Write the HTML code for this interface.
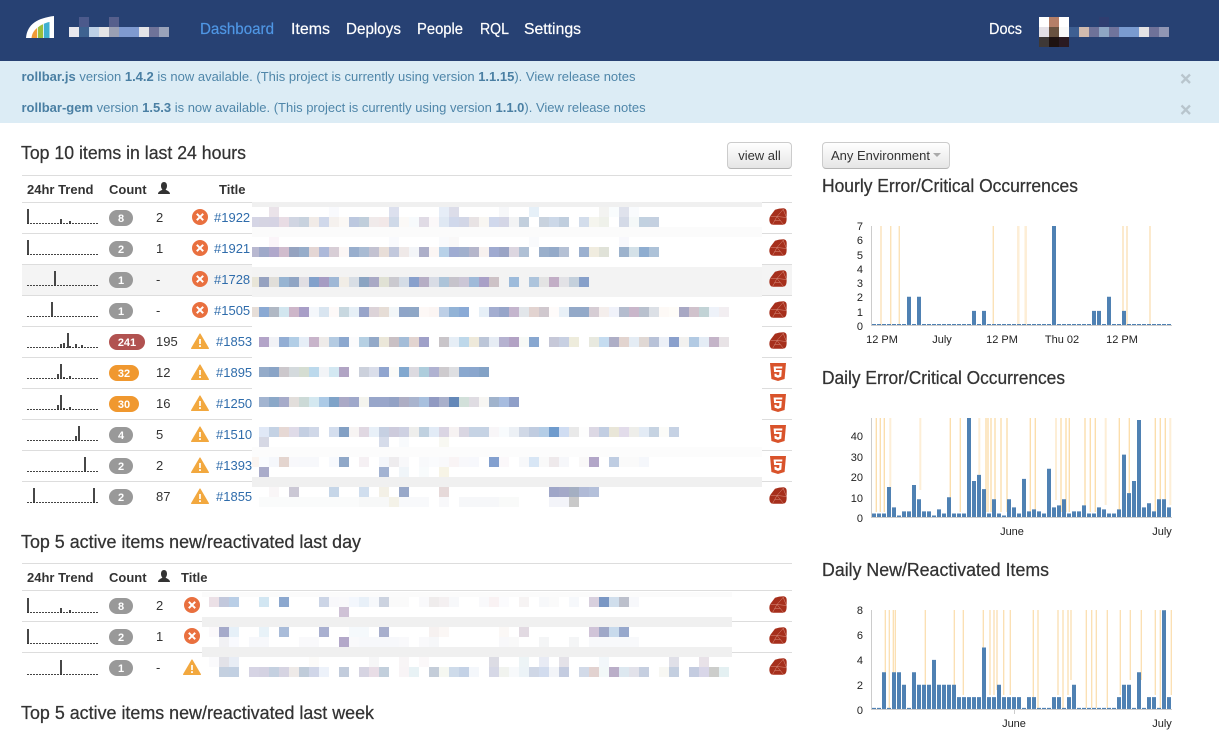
<!DOCTYPE html>
<html><head><meta charset="utf-8"><title>Dashboard</title>
<style>
html,body{margin:0;padding:0;background:#fff;width:1219px;height:734px;overflow:hidden}
body{position:relative;font-family:"Liberation Sans",Arial,sans-serif}
.a{position:absolute}
.l{position:absolute;left:22px;width:770px;height:1px;background:#ddd}
.m{position:absolute;left:259px;width:510px;height:10px}
.n{position:absolute;left:209px;width:530px;height:10px}
.t{position:absolute;left:21.500px;font-size:13px;line-height:16px;color:#4f86a9;white-space:nowrap}
.t b{color:#4a7fa3}
svg{position:absolute;left:0;top:0}
svg text{font-family:"Liberation Sans",Arial,sans-serif}
.h{font-size:18px;fill:#333;stroke:#333;stroke-width:.25}
.v{font-size:16px;fill:#fff;stroke:#fff;stroke-width:.2}
.th{font-size:13px;font-weight:bold;fill:#333}
.c{font-size:13px;fill:#333}
.k{font-size:13px;fill:#2f6cab}
.b{font-size:11px;font-weight:bold;fill:#fff;text-anchor:middle}
.x{font-size:11px;fill:#222;text-anchor:middle}
.y{font-size:11px;fill:#222;text-anchor:end}
</style></head><body>

<div class="a" style="left:0;top:0;width:1219px;height:61px;background:#274173"></div>
<div class="a" style="left:0;top:61px;width:1219px;height:62px;background:#dcecf5"></div>

<!-- header blurred blocks -->
<div class="a" style="left:69px;top:27px;width:100px;height:10px;background:linear-gradient(90deg,#e8e8ee 0 10px,#3e6290 0 20px,#bdd0e6 0 30px,#e4e4e6 0 40px,#9aa0b4 0 50px,#7f9ad0 0 70px,#e4e4e8 0 80px,#6f7399 0 90px,#9aa3ba 0 100px)"></div>
<div class="a" style="left:79px;top:17px;width:10px;height:10px;background:#4c5a8c"></div>
<div class="a" style="left:109px;top:17px;width:10px;height:10px;background:#565f8c"></div>
<div class="a" style="left:1039px;top:17px;width:30px;height:10px;background:linear-gradient(90deg,#fff 0 10px,#b57f68 0 20px,#fff 0 30px)"></div>
<div class="a" style="left:1039px;top:27px;width:30px;height:10px;background:linear-gradient(90deg,#e4e0e6 0 10px,#695240 0 20px,#f8f8f8 0 30px)"></div>
<div class="a" style="left:1039px;top:37px;width:30px;height:10px;background:linear-gradient(90deg,#3e3836 0 10px,#1e1210 0 20px,#2a1a22 0 30px)"></div>
<div class="a" style="left:1069px;top:27px;width:100px;height:10px;background:linear-gradient(90deg,#3e5f92 0 10px,#d0baae 0 20px,#6e7299 0 30px,#8ea6c4 0 40px,#70749c 0 50px,#7a9bd0 0 70px,#e4e2e4 0 80px,#6f7299 0 90px,#9096b4 0 100px)"></div>
<div class="a" style="left:1099px;top:17px;width:10px;height:10px;background:#2f3d70"></div>

<div class="t" style="top:69px"><b>rollbar.js</b> version <b>1.4.2</b> is now available. (This project is currently using version <b>1.1.15</b>). View release notes</div>
<div class="t" style="top:100px"><b>rollbar-gem</b> version <b>1.5.3</b> is now available. (This project is currently using version <b>1.1.0</b>). View release notes</div>

<!-- table rules -->
<div class="l" style="top:175px"></div><div class="l" style="top:202px"></div><div class="l" style="top:233px"></div><div class="l" style="top:264px"></div><div class="l" style="top:295px"></div><div class="l" style="top:326px"></div><div class="l" style="top:357px"></div><div class="l" style="top:388px"></div><div class="l" style="top:419px"></div><div class="l" style="top:450px"></div><div class="l" style="top:481px"></div>
<div class="l" style="top:563px"></div><div class="l" style="top:590px"></div><div class="l" style="top:621px"></div><div class="l" style="top:652px"></div>
<div class="a" style="left:22px;top:265px;width:770px;height:30px;background:#f4f4f4"></div>

<!-- table 1 blurred titles -->
<div class="a" style="left:252px;top:203px;width:510px;height:305px;background:#fff"></div>
<div class="a" style="left:252px;top:202px;width:510px;height:5px;background:#f0f0f0"></div>
<div class="a" style="left:252px;top:227px;width:510px;height:10px;background:#fbfbfb"></div>
<div class="a" style="left:252px;top:267px;width:510px;height:30px;background:#f3f3f3"></div>
<div class="a" style="left:252px;top:447px;width:510px;height:10px;background:#fcfcfc"></div>
<div class="a" style="left:252px;top:477px;width:510px;height:10px;background:#f0f0f0"></div>

<div class="a" style="left:252px;top:217px;width:7px;height:10px;background:#d5d5e5"></div>
<div class="a" style="left:252px;top:247px;width:7px;height:10px;background:#b8b8d0"></div>
<div class="a" style="left:252px;top:277px;width:7px;height:10px;background:#e8e5d8"></div>
<div class="a" style="left:252px;top:307px;width:7px;height:10px;background:#e6ded8"></div>
<div class="a" style="left:252px;top:457px;width:7px;height:10px;background:#fbf5f1"></div>

<div class="m" style="top:207px;background:linear-gradient(90deg,#0000 0 10px,#eae3e9 0 20px,#0000 0 70px,#f9fafd 0 80px,#0000 0 130px,#dce0ee 0 140px,#0000 0 180px,#e6edf7 0 190px,#dcdde9 0 200px,#0000 0 240px,#f6f7f9 0 250px,#0000 0 270px,#e6f0f8 0 280px,#0000 0 340px,#f3f3f1 0 350px,#f9fcfd 0 360px,#dfe2ec 0 370px,#f9fbfd 0 380px,#0000 0)"></div>
<div class="m" style="top:217px;background:linear-gradient(90deg,#d5d4e2 0 10px,#d5d3e3 0 20px,#e8dce4 0 30px,#d0d5e2 0 40px,#c8d2de 0 50px,#f1ebe7 0 60px,#d0d8ea 0 70px,#f5f1ee 0 80px,#fbf8f5 0 90px,#bcc8df 0 100px,#c0cedb 0 110px,#f0eaea 0 120px,#f2e8e8 0 130px,#cfd9e8 0 140px,#fbf9f7 0 150px,#f7fafc 0 160px,#e0dbe5 0 170px,#fbf8f9 0 180px,#dfe8f3 0 190px,#d0d8eb 0 200px,#d2d6e6 0 210px,#e8e3e4 0 220px,#f8f6f2 0 230px,#d0d8ec 0 240px,#d4d6e6 0 250px,#f2f3f4 0 260px,#c2cfdd 0 270px,#fff 0 280px,#c8d2de 0 290px,#ccd8e8 0 300px,#c0cede 0 310px,#fff 0 320px,#d3ddeb 0 330px,#f5f5ee 0 340px,#eff1ea 0 350px,#fff 0 360px,#d4dae7 0 370px,#f4f8f8 0 380px,#c2d1e0 0 390px,#c4d0e0 0 400px,#0000 0)"></div>
<div class="m" style="top:237px;background:linear-gradient(90deg,#0000 0 10px,#fbf5f9 0 20px,#0000 0 130px,#f9fafd 0 140px,#0000 0 180px,#f9fafc 0 190px,#f9f8f8 0 200px,#0000 0 270px,#f9fafc 0 280px,#0000 0 360px,#f8f8fc 0 370px,#0000 0)"></div>
<div class="m" style="top:247px;background:linear-gradient(90deg,#9fa9c9 0 10px,#b0a8cb 0 20px,#d0bccd 0 30px,#95a3c0 0 40px,#97adca 0 50px,#e4d6d4 0 60px,#adb9d9 0 70px,#d8ced6 0 80px,#fbf6f5 0 90px,#98aecd 0 100px,#a9bbd3 0 110px,#c3c2d1 0 120px,#e8ded8 0 130px,#c2c8dc 0 140px,#efe9e8 0 150px,#f3f5f8 0 160px,#adafc9 0 170px,#fbf6f4 0 180px,#b8d1e8 0 190px,#9facd2 0 200px,#a1b0cd 0 210px,#b5b6cb 0 220px,#f7f1ef 0 230px,#9faad0 0 240px,#9aa4c5 0 250px,#dcd6e0 0 260px,#afc0d5 0 270px,#fff 0 280px,#9aafcb 0 290px,#94aac9 0 300px,#b5c1d5 0 310px,#fff 0 320px,#9bb0cf 0 330px,#f0ecdf 0 340px,#e0e2d8 0 350px,#fff 0 360px,#9db3cd 0 370px,#d4e1e8 0 380px,#8fadd0 0 390px,#adc2d8 0 400px,#0000 0)"></div>
<div class="m" style="top:277px;background:linear-gradient(90deg,#96a2c0 0 10px,#e0ded9 0 20px,#97b4d2 0 30px,#90a5c4 0 40px,#e0dee3 0 50px,#82a1cb 0 60px,#a69cc3 0 70px,#9fb8d6 0 80px,#f1ede6 0 90px,#d8dee5 0 100px,#8ba4c2 0 110px,#a9a9c5 0 120px,#e0e1d4 0 130px,#cac9cf 0 140px,#d4dce6 0 150px,#88a0cc 0 160px,#b6aec5 0 170px,#d8dce5 0 180px,#adc4d9 0 190px,#c6c3cb 0 200px,#cbc6d6 0 210px,#9fbad9 0 220px,#a9a0c7 0 230px,#cdc2c6 0 240px,#0000 0 250px,#9dbbdb 0 260px,#0000 0 270px,#adc4dc 0 280px,#e3e3e3 0 290px,#c2aec6 0 300px,#e2e2e6 0 310px,#c4d0dc 0 320px,#87a0ca 0 330px,#0000 0)"></div>
<div class="m" style="top:307px;width:480px;background:linear-gradient(90deg,#8aa9d3 0 10px,#b0b8c4 0 20px,#d2e6ef 0 30px,#cdb6c9 0 40px,#a89ec7 0 50px,#f4f7fb 0 60px,#d9e5f0 0 70px,#fdf9f8 0 80px,#c8d8e0 0 90px,#e6eff6 0 100px,#98a4c9 0 110px,#dcd3d8 0 120px,#e6ddd6 0 130px,#f2f6f8 0 140px,#8fa5c8 0 150px,#8fa7c6 0 160px,#fdf8f6 0 170px,#fbf5f3 0 180px,#bdcfe6 0 190px,#92b3d6 0 200px,#8aaad6 0 210px,#fff 0 220px,#e6eff7 0 230px,#a3add0 0 240px,#97a5c9 0 250px,#c4b5cd 0 260px,#e2e6ea 0 270px,#e2d3d0 0 280px,#d0c8ce 0 290px,#fefbfa 0 300px,#e8f0f7 0 310px,#93a9c8 0 330px,#d6cdd4 0 340px,#f4eeec 0 350px,#f0f2fa 0 360px,#b4bcce 0 370px,#c9b6ca 0 380px,#b9c1ce 0 390px,#dce0e6 0 400px,#fdf9f6 0 410px,#fefcf8 0 420px,#a8a8c4 0 430px,#d0c2cc 0 440px,#c2d3d6 0 450px,#eef2f9 0 460px,#f2eef1 0 470px,#0000 0)"></div>
<div class="m" style="top:337px;width:480px;background:linear-gradient(90deg,#b3a4c8 0 10px,#f1f2f6 0 20px,#93aed4 0 30px,#b2cee6 0 40px,#e6eef7 0 50px,#c8b4ca 0 60px,#eeebe9 0 70px,#b4cbe2 0 80px,#8ca8cf 0 90px,#fbfbfc 0 100px,#b6d0e3 0 110px,#93a9c8 0 120px,#ebe7d9 0 130px,#c9c0c4 0 140px,#a4bdd8 0 150px,#e2d4d0 0 160px,#9fa0c8 0 170px,#fff 0 180px,#c9c5c9 0 190px,#e6eef6 0 200px,#bed8ea 0 210px,#eee9da 0 220px,#bcc6d8 0 230px,#e6ecf4 0 240px,#b5b2d0 0 250px,#b2a2c4 0 260px,#f7f9f6 0 270px,#88a7d0 0 280px,#fff 0 290px,#c6c8d8 0 300px,#c8d0e2 0 310px,#eeecdc 0 320px,#fff 0 330px,#e8e9df 0 340px,#c5dcf0 0 350px,#aeaec6 0 360px,#e2d4cf 0 370px,#e4ecf4 0 380px,#e0d8d4 0 390px,#b8c2d8 0 400px,#ecf0f7 0 410px,#8aa0cc 0 420px,#f2f1ef 0 430px,#b2cae3 0 440px,#e4ecf5 0 450px,#c4b4c8 0 460px,#e8e3e6 0 470px,#0000 0)"></div>
<div class="m" style="top:367px;background:linear-gradient(90deg,#94abc9 0 10px,#8aa4c6 0 20px,#ccc8cc 0 30px,#d4dadd 0 40px,#d5ddd2 0 50px,#bcd9ec 0 60px,#f2f4f7 0 70px,#d3e8f2 0 80px,#b1a4c4 0 90px,#fff 0 100px,#ccd1dc 0 110px,#dadeea 0 120px,#90a5cf 0 130px,#fbfbf8 0 140px,#82a8cf 0 150px,#dcdae0 0 160px,#aecddc 0 170px,#b0b2d1 0 180px,#cecbce 0 190px,#dedfe2 0 200px,#8aa8cf 0 210px,#8aa6cd 0 220px,#83a2c6 0 230px,#0000 0)"></div>
<div class="m" style="top:397px;background:linear-gradient(90deg,#a2b4d0 0 10px,#8ba8c8 0 20px,#a6abc9 0 30px,#e2dedb 0 40px,#ccdad7 0 50px,#d4e8f0 0 60px,#accae6 0 70px,#7fa3c8 0 80px,#aaa9c6 0 90px,#9fa8ca 0 100px,#f4f4ee 0 110px,#98a6ca 0 120px,#99a6ca 0 130px,#93a2c5 0 140px,#aeaec4 0 150px,#a9b4ce 0 160px,#a8c0de 0 170px,#919ac2 0 180px,#a9b0cb 0 190px,#6488b8 0 200px,#d2e0da 0 210px,#dfdce2 0 220px,#f7f6f3 0 230px,#a0b3cc 0 240px,#a7bcdf 0 250px,#8f9fc8 0 260px,#0000 0)"></div>
<div class="m" style="top:427px;background:linear-gradient(90deg,#e0e8f6 0 10px,#c4d2e4 0 20px,#e6d8d4 0 30px,#dfdbe8 0 40px,#c4cfe2 0 50px,#d0d8e8 0 60px,#fff 0 70px,#d4deee 0 80px,#83a0c4 0 90px,#f7f4f3 0 100px,#e0d8e2 0 110px,#e8f0f8 0 120px,#c6d0e2 0 130px,#cdcbdc 0 140px,#ced1e2 0 150px,#eeeeec 0 160px,#c0d1e0 0 170px,#e2ebf6 0 180px,#dad5e3 0 190px,#f6f2f2 0 200px,#d9d6e2 0 210px,#c6d3e4 0 230px,#f8f6f8 0 240px,#f8fbfd 0 250px,#ecf0f5 0 260px,#d0d8e6 0 270px,#c0cce0 0 280px,#b4cde6 0 290px,#6f9bcd 0 300px,#d0ddf2 0 310px,#e9e9e9 0 320px,#fdfdfd 0 330px,#dcd8e4 0 340px,#c2cee2 0 350px,#e9e6d8 0 360px,#e2dcea 0 370px,#eeeeea 0 380px,#e3ebf5 0 390px,#c6d3e2 0 400px,#fbfbf8 0 410px,#c6d2e4 0 420px,#0000 0)"></div>
<div class="m" style="top:437px;background:linear-gradient(90deg,#d6d8e4 0 10px,#0000 0 120px,#d6dcea 0 130px,#0000 0 140px,#f8fafc 0 150px,#0000 0 180px,#f8f8f2 0 190px,#0000 0)"></div>
<div class="m" style="top:457px;background:linear-gradient(90deg,#fafcfe 0 10px,#f5f7fb 0 20px,#e4d5cf 0 30px,#f8f8fb 0 40px,#f7f8fb 0 60px,#fff 0 70px,#f7f9fd 0 80px,#90a8c8 0 90px,#fff 0 100px,#f5f0f3 0 110px,#fff 0 120px,#f4f6fa 0 130px,#eeecee 0 140px,#f8f8fa 0 150px,#fff 0 160px,#f8f9fb 0 170px,#fafbfd 0 180px,#f9f9fb 0 190px,#f9f4f5 0 200px,#f8f8fb 0 210px,#f7f8fc 0 220px,#fff 0 230px,#83a0cf 0 240px,#fbf8fa 0 250px,#fff 0 260px,#f7f8fa 0 270px,#d8e6f5 0 280px,#f9f9f9 0 290px,#eee9eb 0 300px,#f6f7fa 0 310px,#fff 0 320px,#f9f8f8 0 330px,#b2a6c8 0 340px,#fff 0 350px,#bfcde2 0 360px,#fafafa 0 380px,#f5f7fb 0 390px,#0000 0)"></div>
<div class="m" style="top:467px;background:linear-gradient(90deg,#aaacca 0 10px,#0000 0 120px,#a3b3d2 0 130px,#0000 0 140px,#f0f5f9 0 150px,#0000 0 160px,#f8fbfc 0 170px,#0000 0 180px,#f7f4e6 0 190px,#0000 0)"></div>
<div class="m" style="top:487px;background:linear-gradient(90deg,#0000 0 10px,#f9f6f7 0 20px,#0000 0 30px,#cbc8d5 0 40px,#0000 0 70px,#c6d6e8 0 80px,#0000 0 100px,#d0deee 0 110px,#0000 0 120px,#f3f0e6 0 130px,#0000 0 140px,#98a8c9 0 150px,#0000 0 180px,#e6d9d9 0 190px,#0000 0 290px,#9fa6c8 0 300px,#a4a9c8 0 310px,#a4afc2 0 320px,#b0bad6 0 330px,#b4c0da 0 340px,#0000 0)"></div>
<div class="m" style="top:497px;background:linear-gradient(90deg,#fafbfb 0 100px,#f7f8f8 0 130px,#f4f2e8 0 140px,#f8f9fb 0 170px,#0000 0 180px,#f8f8fa 0 190px,#0000 0 200px,#f6f7f9 0 240px,#f9faf9 0 260px,#0000 0 290px,#f3f4f9 0 310px,#c9c9c9 0 320px,#0000 0)"></div>

<!-- table 2 blurred titles -->
<div class="a" style="left:202px;top:591px;width:530px;height:86px;background:#fff"></div>
<div class="a" style="left:202px;top:592px;width:530px;height:5px;background:#fbfbfb"></div>
<div class="a" style="left:202px;top:617px;width:530px;height:10px;background:#f0f0f0"></div>
<div class="a" style="left:202px;top:647px;width:530px;height:10px;background:#f0f0f0"></div>

<div class="n" style="top:597px;background:linear-gradient(90deg,#ebe0e6 0 10px,#c2c8dc 0 20px,#b9cee6 0 30px,#0000 0 50px,#d2e6f2 0 60px,#0000 0 70px,#8ca8cf 0 80px,#0000 0 110px,#ccd5e6 0 120px,#f8f8fb 0 130px,#f9f9fb 0 140px,#f3f7fd 0 150px,#e8f0f8 0 160px,#f6f8fb 0 170px,#ccd3e0 0 180px,#fafafa 0 200px,#0000 0 210px,#f9f9fb 0 220px,#efecec 0 230px,#f4f0f1 0 240px,#f7f8fa 0 250px,#0000 0 270px,#f9f9fb 0 280px,#f9f2f3 0 290px,#fbfbfd 0 300px,#0000 0 310px,#f6f3f3 0 320px,#0000 0 330px,#f7f8fa 0 340px,#fafafa 0 350px,#0000 0 360px,#f6f8fb 0 370px,#0000 0 380px,#d8d0de 0 390px,#7a97c4 0 400px,#d0deec 0 410px,#bcc0cc 0 420px,#f7f8fb 0 430px,#0000 0)"></div>
<div class="n" style="top:607px;background:linear-gradient(90deg,#0000 0 130px,#cfc2d6 0 140px,#0000 0)"></div>
<div class="n" style="top:627px;background:linear-gradient(90deg,#fbf9fb 0 10px,#a5aaca 0 20px,#e6f0f8 0 30px,#0000 0 50px,#e8f2f8 0 60px,#0000 0 70px,#a9bcd9 0 80px,#0000 0 110px,#a9b0d0 0 120px,#0000 0 140px,#f5f9fc 0 160px,#0000 0 170px,#a8afcd 0 180px,#0000 0 220px,#f6f1f0 0 230px,#fbf7f5 0 240px,#0000 0 290px,#fbf8f6 0 300px,#0000 0 310px,#e2dae2 0 320px,#0000 0 380px,#d0c4d8 0 390px,#9fa8c8 0 400px,#c8daec 0 410px,#97a8cc 0 420px,#0000 0)"></div>
<div class="n" style="top:637px;background:linear-gradient(90deg,#0000 0 10px,#f1f1f4 0 20px,#f9fafe 0 30px,#0000 0 40px,#f7f8fb 0 60px,#0000 0 90px,#f9f9fb 0 110px,#0000 0 130px,#b3a8c9 0 140px,#f9f9fb 0 150px,#f7f8fb 0 190px,#f9f9fb 0 200px,#0000 0 210px,#f9f9fb 0 220px,#f6f7f9 0 230px,#0000 0 290px,#f8f8fa 0 300px,#f9f9f9 0 310px,#0000 0 330px,#f4f5f6 0 340px,#0000 0 360px,#f4f5f6 0 370px,#0000 0 380px,#f8f9fb 0 430px,#0000 0)"></div>
<div class="n" style="top:657px;background:linear-gradient(90deg,#fafafc 0 10px,#e2e2e8 0 20px,#e8edf5 0 30px,#0000 0 100px,#fcfbf9 0 110px,#0000 0 160px,#f6f6f7 0 170px,#0000 0 190px,#f8f5f6 0 200px,#0000 0 210px,#fbf8f9 0 220px,#0000 0 280px,#dcdce4 0 290px,#0000 0 310px,#edf4f6 0 320px,#0000 0 330px,#e8ebf4 0 340px,#0000 0 350px,#e4e2e8 0 360px,#0000 0 390px,#f2f7fa 0 400px,#0000 0 460px,#e0e0e8 0 470px,#0000 0 490px,#e8e2e8 0 500px,#0000 0)"></div>
<div class="n" style="top:667px;background:linear-gradient(90deg,#0000 0 10px,#c4d0e0 0 20px,#c2d0e2 0 30px,#0000 0 40px,#d6d4e4 0 50px,#d4d2e2 0 60px,#c4d0e0 0 70px,#d6d4e2 0 80px,#eeeae8 0 90px,#c0ccda 0 100px,#d0d6e8 0 110px,#edf2fa 0 120px,#0000 0 130px,#c2ccdc 0 140px,#0000 0 150px,#d6d4e2 0 160px,#e8dde6 0 170px,#c2cfdc 0 180px,#0000 0 190px,#f8f4f6 0 200px,#e8f2f5 0 210px,#0000 0 220px,#c4cdd9 0 230px,#f5f7f1 0 240px,#cedbea 0 250px,#c4d2e6 0 260px,#f4f7fb 0 270px,#0000 0 280px,#d6d8e6 0 290px,#f1f3ef 0 300px,#f7f9fb 0 310px,#ecf3f7 0 320px,#cfd7e6 0 330px,#d2dcee 0 340px,#f2f4f8 0 350px,#c4cce0 0 360px,#0000 0 370px,#d2dae8 0 380px,#e2d2d0 0 390px,#f2f8f8 0 400px,#baaec8 0 410px,#dde8f0 0 420px,#e2e2ea 0 430px,#c6cfe0 0 440px,#0000 0 450px,#f7f7f3 0 460px,#c4cfe0 0 470px,#0000 0 480px,#c4cce0 0 490px,#d8d6e8 0 500px,#cccdcb 0 510px,#e4f0f2 0 520px,#0000 0)"></div>

<!-- buttons -->
<div class="a" style="left:727px;top:142px;width:63px;height:25px;border:1px solid #ccc;border-bottom-color:#b5b5b5;border-radius:4px;background:linear-gradient(#fff,#e6e6e6);font-size:13px;line-height:25px;text-align:center;color:#333">view all</div>
<div class="a" style="left:822px;top:142px;width:126px;height:25px;border:1px solid #ccc;border-bottom-color:#b5b5b5;border-radius:4px;background:linear-gradient(#fff,#e6e6e6);font-size:13px;line-height:25px;color:#333;text-indent:8px">Any Environment</div>
<div class="a" style="left:933px;top:153px;width:0;height:0;border-left:4px solid transparent;border-right:4px solid transparent;border-top:4px solid #aaa"></div>

<svg width="1219" height="734" viewBox="0 0 1219 734" xmlns="http://www.w3.org/2000/svg">
<defs>
<g id="e"><circle cx="8" cy="8" r="8" fill="#e9703f"/><path d="M4.800 4.800L11.200 11.200M11.200 4.800L4.800 11.200" stroke="#fff" stroke-width="2"/></g>
<g id="w"><path d="M9 1L17.400 15.400H.6Z" fill="#f2a83f" stroke="#f2a83f" stroke-width="1.200" stroke-linejoin="round"/><path d="M9 6V11" stroke="#fff" stroke-width="1.700"/><rect x="8.100" y="12.200" width="1.800" height="1.800" fill="#fff"/></g>
<g id="r"><path d="M6 1.800Q10 .2 14.500 .2Q17.700 .5 17.700 4L17.600 12Q17.300 16.600 14 16.800H3.500Q1 16.400 .4 12.800Q0 9.500 2 7Z" fill="#a62f1c"/><path d="M3.500 16.500L8 8.500L14.500 16.500M8 8.500L14.500 1M8 8.500L1.500 8.500M8 8.500L17.500 9.500M14 1L17.500 9.500M5.500 12.500H11.500" stroke="#d98f7f" stroke-width=".5" fill="none"/></g>
<g id="s"><path d="M0 0H16L14.600 16L8 18L1.400 16Z" fill="#d9532b"/><path d="M12.400 3.500H3.600L4.100 9H9.400L9.200 11.700L8 12.200L6.600 11.700L6.500 10.700H4.400L4.600 13.600L8 14.900L11.300 13.600L11.800 7H6L5.800 5.500H12.200Z" fill="#fff"/></g>
<path id="u" d="M0 12C0 9.200 3 8.800 4.400 7.600C3.400 6.600 3 5.400 3 3.800C3 1.400 4.200 0 6 0S9 1.400 9 3.800C9 5.400 8.600 6.600 7.600 7.600C9 8.800 12 9.200 12 12Z" fill="#333"/>
</defs>

<!-- logo -->
<path d="M26 38C27 24 38 18 54 16V38Z" fill="#fff"/>
<path d="M31.500 38C32 33.500 34 30.500 37 28V38Z" fill="#f09a35"/><path d="M37.800 38V27.500C39.500 26 41 25 43 24.200V38Z" fill="#9cbf3c"/><path d="M43.800 38V23.800C45.500 23 47.500 22.300 49.500 22V38Z" fill="#3fb0d0"/>

<!-- nav -->
<g class="v">
<text x="200" y="34" textLength="74" lengthAdjust="spacingAndGlyphs" style="fill:#4f96e4;stroke:#4f96e4">Dashboard</text>
<text x="291" y="34" textLength="39" lengthAdjust="spacingAndGlyphs">Items</text>
<text x="346" y="34" textLength="55" lengthAdjust="spacingAndGlyphs">Deploys</text>
<text x="417" y="34" textLength="46" lengthAdjust="spacingAndGlyphs">People</text>
<text x="480" y="34" textLength="29" lengthAdjust="spacingAndGlyphs">RQL</text>
<text x="524" y="34" textLength="57" lengthAdjust="spacingAndGlyphs">Settings</text>
<text x="989" y="34" textLength="33" lengthAdjust="spacingAndGlyphs">Docs</text>
</g>

<!-- close -->
<path d="M1181.500 74.500L1190 83M1190 74.500L1181.500 83M1181.500 105.500L1190 114M1190 105.500L1181.500 114" stroke="#b8c5cd" stroke-width="2.300"/>

<!-- headings -->
<g class="h">
<text x="21" y="159" textLength="225" lengthAdjust="spacingAndGlyphs">Top 10 items in last 24 hours</text>
<text x="21" y="548" textLength="340" lengthAdjust="spacingAndGlyphs">Top 5 active items new/reactivated last day</text>
<text x="21" y="719" textLength="353" lengthAdjust="spacingAndGlyphs">Top 5 active items new/reactivated last week</text>
<text x="822" y="192" textLength="256" lengthAdjust="spacingAndGlyphs">Hourly Error/Critical Occurrences</text>
<text x="822" y="384" textLength="243" lengthAdjust="spacingAndGlyphs">Daily Error/Critical Occurrences</text>
<text x="822" y="576" textLength="227" lengthAdjust="spacingAndGlyphs">Daily New/Reactivated Items</text>
</g>

<!-- table headers -->
<g class="th">
<text x="27" y="194">24hr Trend</text><text x="109" y="194">Count</text><text x="219" y="194">Title</text>
<text x="27" y="582">24hr Trend</text><text x="109" y="582">Count</text><text x="181" y="582">Title</text>
</g>
<use href="#u" x="158" y="182"/><use href="#u" x="158" y="570"/>

<!-- sparklines baseline -->
<path d="M27 223.500H98M27 254.500H98M27 285.500H98M27 316.500H98M27 347.500H98M27 378.500H98M27 409.500H98M27 440.500H98M27 471.500H98M27 502.500H98M27 612.500H98M27 643.500H98M27 674.500H98" stroke="#444" stroke-width="1" stroke-dasharray="2 1"/>
<path d="M28 224V209M61 224V219M70 224V221M28 255V240M55 286V271M52 317V302M68 348V333M61 348V344M64 348V343M70 348V346M76 348V344M82 348V345M58 379V374M61 379V364M64 379V377M70 379V376M58 410V405M61 410V395M64 410V408M70 410V407M76 441V436M79 441V426M85 472V457M34 503V488M94 503V488M28 613V598M61 613V608M70 613V610M28 644V629M61 675V660" stroke="#333" stroke-width="1.800"/>

<!-- badges -->
<g fill="#999">
<rect x="109" y="210" width="24" height="16" rx="8"/><rect x="109" y="241" width="24" height="16" rx="8"/><rect x="109" y="272" width="24" height="16" rx="8"/><rect x="109" y="303" width="24" height="16" rx="8"/>
<rect x="109" y="334" width="36" height="16" rx="8" fill="#b15250"/>
<rect x="109" y="365" width="30" height="16" rx="8" fill="#f0982f"/><rect x="109" y="396" width="30" height="16" rx="8" fill="#f0982f"/>
<rect x="109" y="427" width="24" height="16" rx="8"/><rect x="109" y="458" width="24" height="16" rx="8"/><rect x="109" y="489" width="24" height="16" rx="8"/>
<rect x="109" y="598" width="24" height="16" rx="8"/><rect x="109" y="629" width="24" height="16" rx="8"/><rect x="109" y="660" width="24" height="16" rx="8"/>
</g>
<g class="b">
<text x="121" y="222">8</text><text x="121" y="253">2</text><text x="121" y="284">1</text><text x="121" y="315">1</text><text x="127" y="346">241</text><text x="124" y="377">32</text><text x="124" y="408">30</text><text x="121" y="439">4</text><text x="121" y="470">2</text><text x="121" y="501">2</text><text x="121" y="610">8</text><text x="121" y="641">2</text><text x="121" y="672">1</text>
</g>

<!-- user counts -->
<g class="c">
<text x="156" y="222">2</text><text x="156" y="253">1</text><text x="156" y="284">-</text><text x="156" y="315">-</text><text x="156" y="346">195</text><text x="156" y="377">12</text><text x="156" y="408">16</text><text x="156" y="439">5</text><text x="156" y="470">2</text><text x="156" y="501">87</text><text x="156" y="610">2</text><text x="156" y="641">1</text><text x="156" y="672">-</text>
</g>

<!-- level icons -->
<use href="#e" x="192" y="209"/><use href="#e" x="192" y="240"/><use href="#e" x="192" y="271"/><use href="#e" x="192" y="302"/>
<use href="#w" x="191" y="333"/><use href="#w" x="191" y="364"/><use href="#w" x="191" y="395"/><use href="#w" x="191" y="426"/><use href="#w" x="191" y="457"/><use href="#w" x="191" y="488"/>
<use href="#e" x="184" y="597"/><use href="#e" x="184" y="628"/><use href="#w" x="183" y="659"/>

<!-- links -->
<g class="k">
<text x="214" y="222">#1922</text><text x="214" y="253">#1921</text><text x="214" y="284">#1728</text><text x="214" y="315">#1505</text><text x="216" y="346">#1853</text><text x="216" y="377">#1895</text><text x="216" y="408">#1250</text><text x="216" y="439">#1510</text><text x="216" y="470">#1393</text><text x="216" y="501">#1855</text>
</g>

<!-- language icons -->
<use href="#r" x="769" y="208"/><use href="#r" x="769" y="239"/><use href="#r" x="769" y="270"/><use href="#r" x="769" y="301"/><use href="#r" x="769" y="332"/>
<use href="#s" x="770" y="363"/><use href="#s" x="770" y="394"/><use href="#s" x="770" y="425"/><use href="#s" x="770" y="456"/>
<use href="#r" x="769" y="487"/><use href="#r" x="769" y="596"/><use href="#r" x="769" y="627"/><use href="#r" x="769" y="658"/>

<!-- chart 1 -->
<path d="M881 226V325M890.700 226V325M899.300 226V325M993.300 226V325M1123 226V312M1127 226V325M1150 226V325" stroke="#fbe2b8" stroke-width="1.400"/>
<path d="M1018.300 226V325M1025.700 226V325" stroke="#fdeed6" stroke-width="2.500"/>
<path d="M872 324.500H1171" stroke="#4f81b3" stroke-width="1" stroke-dasharray="4 1"/>
<path transform="translate(872 325) scale(1 -14.14)" d="M37 0V2M47 0V2M102 0V1M112 0V1M182 0V7M222 0V1M227 0V1M237 0V2M252 0V1" stroke="#4f81b3" stroke-width="4"/>
<path d="M871.500 226V325.500H1172" fill="none" stroke="#ccc"/>
<g class="y"><text x="863" y="230">7</text><text x="863" y="244">6</text><text x="863" y="259">5</text><text x="863" y="273">4</text><text x="863" y="287">3</text><text x="863" y="301">2</text><text x="863" y="316">1</text><text x="863" y="330">0</text></g>
<g class="x"><text x="882" y="343">12 PM</text><text x="942" y="343">July</text><text x="1002" y="343">12 PM</text><text x="1062" y="343">Thu 02</text><text x="1122" y="343">12 PM</text></g>

<!-- chart 2 -->
<path d="M876.300 418V512M880.300 418V512M884.300 418V512M950.300 418V512M960.300 418V512M986 418V512M988 418V512M991 418V512M995 418V512M1001 418V512M1007 418V512M1030.300 418V512M1035.300 418V512M1061 418V512M1066 418V512M1069.300 418V512M1085 418V512M1090.300 418V512M1095.300 418V512M1119.300 418V512M1129.300 418V512M1155.300 418V512M1160.300 418V512M1165.300 418V512" stroke="#fbdca8" stroke-width="1.300"/>
<path d="M890.300 418V490M920.300 418V490M979.300 418V480M1056 418V500M1105.700 418V505M1170.300 418V505" stroke="#fdeed6" stroke-width="2"/>
<path transform="translate(872 517.500) scale(1 -2.03)" d="M2 0V2M7 0V2M12 0V2M17 0V15M22 0V5M27 0V1M32 0V3M37 0V3M42 0V16M47 0V9M52 0V3M57 0V3M62 0V1M67 0V4M72 0V2M77 0V10M82 0V2M87 0V2M92 0V2M97 0V49M102 0V18M107 0V21M112 0V14M117 0V2M122 0V9M127 0V2M132 0V1M137 0V9M142 0V5M147 0V2M152 0V19M157 0V3M162 0V4M167 0V3M172 0V2M177 0V24M182 0V5M187 0V6M192 0V9M197 0V2M202 0V3M207 0V3M212 0V6M217 0V2M222 0V2M227 0V5M232 0V4M237 0V2M242 0V2M247 0V4M252 0V31M257 0V12M262 0V18M267 0V48M272 0V5M277 0V7M282 0V3M287 0V9M292 0V9M297 0V5" stroke="#4f81b3" stroke-width="4"/>
<path d="M871.500 418V517.500H1172" fill="none" stroke="#ccc"/>
<g class="y"><text x="863" y="440">40</text><text x="863" y="461">30</text><text x="863" y="481">20</text><text x="863" y="502">10</text><text x="863" y="522">0</text></g>
<g class="x"><text x="1012" y="535">June</text><text x="1162" y="535">July</text></g>

<!-- chart 3 -->
<path d="M885.300 610V695M889.300 610V708M893.300 610V695M895.300 610V690M925.300 610V685M954.300 610V685M963.300 610V695M983.300 610V660M990 610V695M994 610V695M997 610V690M1003.700 610V695M1010.300 610V695M1033.300 610V708M1038 610V708M1058 610V695M1063 610V708M1068 610V695M1071 610V680M1086.300 610V708M1091.700 610V708M1096.300 610V708M1107.300 610V708M1120.300 610V695M1130.300 610V680M1141.300 610V680M1155.300 610V695M1160.300 610V708M1165.300 610V695M1171.300 610V695" stroke="#fbdfb0" stroke-width="1.300"/>
<path d="M872 708.500H1171" stroke="#4f81b3" stroke-width="1.200" stroke-dasharray="4 1"/>
<path transform="translate(872 709.500) scale(1 -12.4)" d="M12 0V3M22 0V3M27 0V3M32 0V2M42 0V3M47 0V2M52 0V2M57 0V2M62 0V4M67 0V2M72 0V2M77 0V2M82 0V2M87 0V1M92 0V1M97 0V1M102 0V1M107 0V1M112 0V5M117 0V1M122 0V1M127 0V2M132 0V1M137 0V1M142 0V1M147 0V1M157 0V1M162 0V1M182 0V1M187 0V1M197 0V1M202 0V2M247 0V1M252 0V2M257 0V2M267 0V3M277 0V1M282 0V1M292 0V8M297 0V1" stroke="#4f81b3" stroke-width="4"/>
<path d="M871.500 610V709.500H1172M1014.500 710V714" fill="none" stroke="#ccc"/>
<g class="y"><text x="863" y="614">8</text><text x="863" y="639">6</text><text x="863" y="664">4</text><text x="863" y="689">2</text><text x="863" y="714">0</text></g>
<g class="x"><text x="1014" y="727">June</text><text x="1162" y="727">July</text></g>
</svg>
</body></html>
